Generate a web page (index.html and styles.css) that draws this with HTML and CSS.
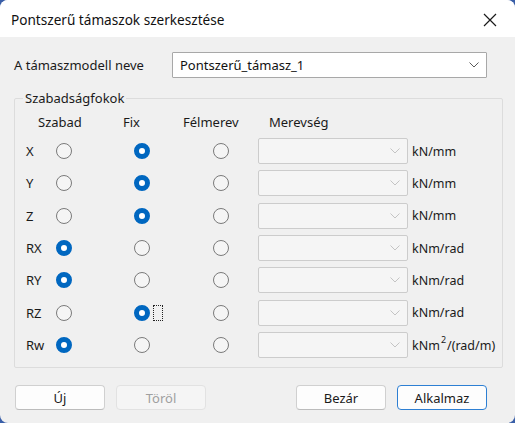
FILE: index.html
```html
<!DOCTYPE html>
<html lang="hu">
<head>
<meta charset="utf-8">
<title>Pontszerű támaszok szerkesztése</title>
<link rel="stylesheet" href="styles.css">
</head>
<body>
<div class="window">
  <div class="titlebar">
    <span class="title">Pontszerű támaszok szerkesztése</span>
    <svg class="close" width="14" height="14" viewBox="0 0 14 14"><path d="M1 1 L13 13 M13 1 L1 13" stroke="#1a1a1a" stroke-width="1.2" fill="none"/></svg>
  </div>
  <div class="content">
    <div class="name-row">
      <span class="name-label">A támaszmodell neve</span>
      <div class="combo">
        <span class="combo-text">Pontszerű_támasz_1</span>
        <svg class="chev" width="12" height="8" viewBox="0 0 12 8"><path d="M1.5 1.5 L6 6 L10.5 1.5" stroke="#5a5a5a" stroke-width="1" fill="none"/></svg>
      </div>
    </div>

    <div class="group">
      <span class="legend">Szabadságfokok</span>
      <div class="head">
        <span class="h h-szabad">Szabad</span>
        <span class="h h-fix">Fix</span>
        <span class="h h-fel">Félmerev</span>
        <span class="h">Merevség</span>
      </div>

      <div class="row">
        <span class="lbl">X</span>
        <span class="cell c1"><span class="radio"></span></span>
        <span class="cell c2"><span class="radio on"></span></span>
        <span class="cell c3"><span class="radio"></span></span>
        <span class="dcombo"><svg class="chev" width="12" height="8" viewBox="0 0 12 8"><path d="M1.5 1.5 L6 6 L10.5 1.5" stroke="#c4c4c4" stroke-width="1" fill="none"/></svg></span>
        <span class="unit">kN/mm</span>
      </div>
      <div class="row">
        <span class="lbl">Y</span>
        <span class="cell c1"><span class="radio"></span></span>
        <span class="cell c2"><span class="radio on"></span></span>
        <span class="cell c3"><span class="radio"></span></span>
        <span class="dcombo"><svg class="chev" width="12" height="8" viewBox="0 0 12 8"><path d="M1.5 1.5 L6 6 L10.5 1.5" stroke="#c4c4c4" stroke-width="1" fill="none"/></svg></span>
        <span class="unit">kN/mm</span>
      </div>
      <div class="row">
        <span class="lbl">Z</span>
        <span class="cell c1"><span class="radio"></span></span>
        <span class="cell c2"><span class="radio on"></span></span>
        <span class="cell c3"><span class="radio"></span></span>
        <span class="dcombo"><svg class="chev" width="12" height="8" viewBox="0 0 12 8"><path d="M1.5 1.5 L6 6 L10.5 1.5" stroke="#c4c4c4" stroke-width="1" fill="none"/></svg></span>
        <span class="unit">kN/mm</span>
      </div>
      <div class="row">
        <span class="lbl">RX</span>
        <span class="cell c1"><span class="radio on"></span></span>
        <span class="cell c2"><span class="radio"></span></span>
        <span class="cell c3"><span class="radio"></span></span>
        <span class="dcombo"><svg class="chev" width="12" height="8" viewBox="0 0 12 8"><path d="M1.5 1.5 L6 6 L10.5 1.5" stroke="#c4c4c4" stroke-width="1" fill="none"/></svg></span>
        <span class="unit">kNm/rad</span>
      </div>
      <div class="row">
        <span class="lbl">RY</span>
        <span class="cell c1"><span class="radio on"></span></span>
        <span class="cell c2"><span class="radio"></span></span>
        <span class="cell c3"><span class="radio"></span></span>
        <span class="dcombo"><svg class="chev" width="12" height="8" viewBox="0 0 12 8"><path d="M1.5 1.5 L6 6 L10.5 1.5" stroke="#c4c4c4" stroke-width="1" fill="none"/></svg></span>
        <span class="unit">kNm/rad</span>
      </div>
      <div class="row">
        <span class="lbl">RZ</span>
        <span class="cell c1"><span class="radio"></span></span>
        <span class="cell c2"><span class="radio on"></span><span class="focus"></span></span>
        <span class="cell c3"><span class="radio"></span></span>
        <span class="dcombo"><svg class="chev" width="12" height="8" viewBox="0 0 12 8"><path d="M1.5 1.5 L6 6 L10.5 1.5" stroke="#c4c4c4" stroke-width="1" fill="none"/></svg></span>
        <span class="unit">kNm/rad</span>
      </div>
      <div class="row">
        <span class="lbl">Rw</span>
        <span class="cell c1"><span class="radio on"></span></span>
        <span class="cell c2"><span class="radio"></span></span>
        <span class="cell c3"><span class="radio"></span></span>
        <span class="dcombo"><svg class="chev" width="12" height="8" viewBox="0 0 12 8"><path d="M1.5 1.5 L6 6 L10.5 1.5" stroke="#c4c4c4" stroke-width="1" fill="none"/></svg></span>
        <span class="unit">kNm<sup>2</sup>/(rad/m)</span>
      </div>
    </div>

    <div class="buttons">
      <button class="btn">Új</button>
      <button class="btn disabled">Töröl</button>
      <span class="spacer"></span>
      <button class="btn">Bezár</button>
      <button class="btn default">Alkalmaz</button>
    </div>
  </div>
</div>
</body>
</html>
```

FILE: styles.css
```css
* { box-sizing: border-box; }
html, body {
  margin: 0;
  padding: 0;
  width: 515px;
  height: 423px;
  overflow: hidden;
  background: #3a5fa8;
}
body {
  font-family: "Segoe UI", "Noto Sans", sans-serif;
  font-size: 13px;
  color: #1a1a1a;
}
.window {
  width: 515px;
  height: 423px;
  border-radius: 8px;
  overflow: hidden;
  background: #f0f0f0;
  display: flex;
  flex-direction: column;
}
.titlebar {
  height: 37px;
  background: #ffffff;
  display: flex;
  align-items: center;
  padding: 0 0 0 11px;
}
.title {
  font-size: 13.6px;
  color: #111;
  flex: 1;
  padding-top: 2px;
}
.close {
  margin-right: 18px;
  margin-top: 3px;
}
.content {
  flex: 1;
  display: flex;
  flex-direction: column;
  padding: 15px 12px 0 14px;
}
.name-row {
  display: flex;
  align-items: center;
  height: 26px;
}
.name-label {
  width: 158px;
  padding-left: 0;
  color: #1a1a1a;
}
.combo {
  width: 315px;
  height: 26px;
  background: #ffffff;
  border: 1px solid #a8a8a8;
  border-radius: 1px;
  display: flex;
  align-items: center;
  padding: 0 6px 0 7px;
}
.combo-text { flex: 1; color: #111; }
.chev { display: block; }

.group {
  position: relative;
  margin-top: 20px;
  width: 489px;
  height: 270px;
  border: 1px solid #dcdcdc;
  border-radius: 2px;
  padding: 10px 0 0 11px;
}
.legend {
  position: absolute;
  top: -10px;
  left: 8px;
  padding: 0 2px;
  background: #f0f0f0;
  color: #1a1a1a;
}
.head {
  display: flex;
  height: 26px;
  align-items: center;
  color: #1a1a1a;
}
.h { display: block; }
.h-szabad { margin-left: 12px; width: 85px; }
.h-fix { width: 60px; }
.h-fel { width: 86px; }
.row {
  display: flex;
  align-items: center;
  height: 32.33px;
}
.lbl { width: 30px; }
.cell {
  display: flex;
  align-items: center;
  position: relative;
  width: 16px;
  height: 16px;
}
.c2 { margin-left: 62px; }
.c3 { margin-left: 63px; }
.radio {
  display: block;
  width: 16px;
  height: 16px;
  border-radius: 50%;
  border: 1px solid #7a7a7a;
  background: #f5f5f5;
}
.radio.on {
  border: 5px solid #0067c0;
  background: #ffffff;
}
.focus {
  position: absolute;
  left: 19px;
  top: 0;
  width: 10px;
  height: 16px;
  border: 1px dotted #222;
}
.dcombo {
  margin-left: 29px;
  width: 150px;
  height: 26px;
  border: 1px solid #cccccc;
  border-radius: 2px;
  background: #f5f5f5;
  display: flex;
  align-items: center;
  justify-content: flex-end;
  padding-right: 6px;
}
.unit {
  margin-left: 4px;
  color: #1a1a1a;
  font-size: 12.5px;
}
.unit sup {
  font-size: 9px;
  line-height: 0;
  vertical-align: 7px;
  margin: 0 1px;
}
.buttons {
  display: flex;
  margin-top: 17px;
  padding-left: 1px;
  padding-right: 16px;
  gap: 11px;
}
.spacer { flex: 1; }
.btn {
  width: 90px;
  height: 25px;
  font-family: inherit;
  font-size: 13px;
  color: #1a1a1a;
  background: #fdfdfd;
  border: 1px solid #d0d0d0;
  border-bottom-color: #bcbcbc;
  border-radius: 4px;
  padding: 0;
}
.btn.disabled {
  background: #f5f5f5;
  border-color: #e2e2e2;
  color: #a0a0a0;
}
.btn.default {
  border: 1.5px solid #2d7fd3;
}
```
